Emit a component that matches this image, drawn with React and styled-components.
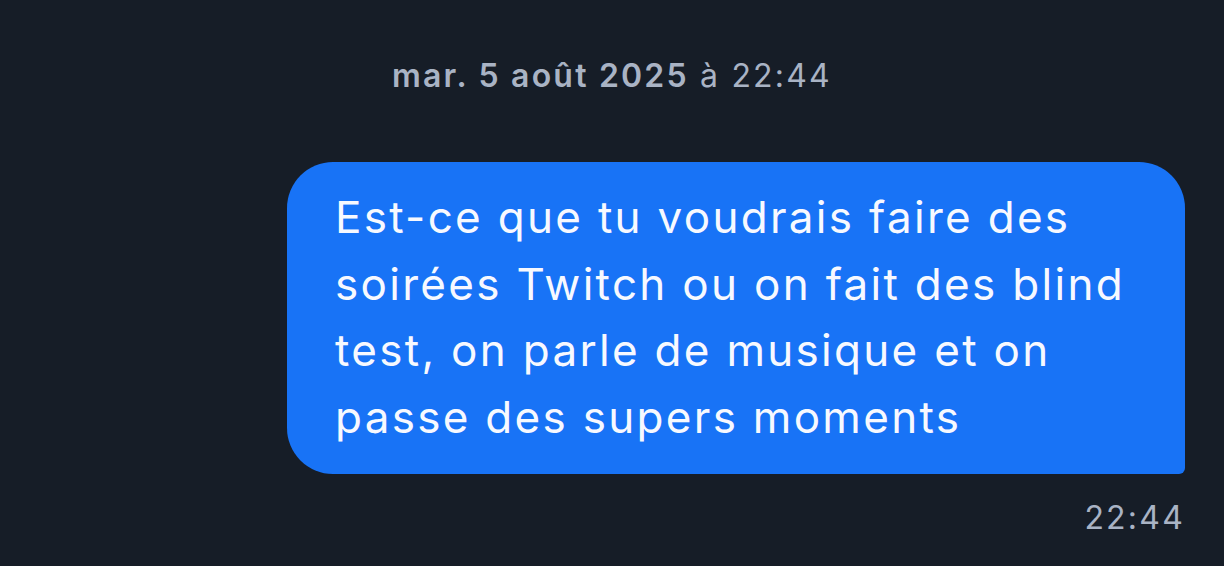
import styled, { createGlobalStyle } from "styled-components"

const GlobalStyle = createGlobalStyle`
  html, body {
    margin: 0;
    padding: 0;
    background-color: #161d27;
  }

  body {
    font-family: Inter, "Noto Sans", sans-serif;
    -webkit-font-smoothing: antialiased;
  }
`

const App = () => {
  return (
    <Wrapper>
      <GlobalStyle />
      <DateLabel>
        <strong>mar. 5 août 2025</strong> à 22:44
      </DateLabel>
      <MessageRow>
        <Bubble>
          Est-ce que tu voudrais faire des soirées Twitch ou on fait des blind
          test, on parle de musique et on passe des supers moments
        </Bubble>
      </MessageRow>
      <Time>22:44</Time>
    </Wrapper>
  )
}

export default App

const Wrapper = styled.main`
  display: flex;
  flex-direction: column;
  min-height: 566px;
  box-sizing: border-box;
  padding: 56px 39px 0 39px;
  background-color: #161d27;
`

const DateLabel = styled.div`
  text-align: center;
  font-size: 32px;
  line-height: 40px;
  letter-spacing: 2.2px;
  color: #a9b3c4;
  margin-bottom: 66px;

  strong {
    font-weight: 600;
  }
`

const MessageRow = styled.div`
  display: flex;
  justify-content: flex-end;
`

const Bubble = styled.div`
  box-sizing: border-box;
  width: 898px;
  padding: 22px 48px 24px 48px;
  background-color: #1873f6;
  color: #f7f9ff;
  font-size: 44px;
  line-height: 66.5px;
  letter-spacing: 2.3px;
  border-radius: 46px 46px 6px 46px;
`

const Time = styled.div`
  align-self: flex-end;
  margin-top: 24px;
  font-size: 32px;
  line-height: 40px;
  letter-spacing: 2.2px;
  color: #a9b3c4;
`
